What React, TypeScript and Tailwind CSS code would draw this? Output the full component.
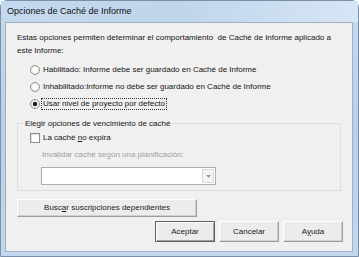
import React from 'react';

const font = { fontFamily: '"Liberation Sans", Arial, sans-serif' };

const Radio = ({ checked }: { checked?: boolean }) => (
  <svg width="10" height="10" viewBox="0 0 10 10" className="shrink-0">
    <circle cx="5" cy="5" r="4.5" fill="#ffffff" stroke="#8c8c8c" />
    <circle cx="5" cy="5" r="3.4" fill="none" stroke="#e4e4e4" />
    {checked && <circle cx="5" cy="5" r="2.2" fill="#1c1c1c" />}
  </svg>
);

const Button = ({ children, isDefault, className = '' }: { children: React.ReactNode; isDefault?: boolean; className?: string }) => (
  <button
    type="button"
    className={`flex items-center justify-center bg-[#ececec] text-[8px] text-[#1a1a1a] ${
      isDefault
        ? 'border border-[#5e5e5e] shadow-[inset_1px_1px_0_#ffffff,inset_-1px_-1px_0_#a0a0a0]'
        : 'border border-t-[#ffffff] border-l-[#ffffff] border-b-[#9c9c9c] border-r-[#9c9c9c] shadow-[inset_-1px_-1px_0_#d0d0d0]'
    } ${className}`}
  >
    {children}
  </button>
);

export default function App() {
  return (
    <div style={font} className="w-[359px] h-[257px] overflow-hidden bg-[#ffffff]">
      <div className="flex flex-col w-[359px] h-[257px] rounded-t-[7px] border border-[#7b90a8] bg-gradient-to-b from-[#c6daef] via-[#b9d0e9] to-[#c2d7ec]">
        {/* title bar */}
        <div className="h-[21px] flex items-center pl-[6px] text-[9px] text-[#101010] bg-gradient-to-r from-[#c4d9ee] via-[#bfd5ec] to-[#d7e6f5]">
          Opciones de Caché de Informe
        </div>
        {/* client area */}
        <div className="ml-[4px] mr-[5px] mb-[4px] flex-1 border border-[#9fb0c4] bg-[#f0f0f0] pl-[11px] pr-[9px] pt-[8px] text-[8px] text-[#141414]">
          <p className="leading-[13px]">
            Estas opciones permiten determinar el comportamiento&nbsp; de Caché de Informe aplicado a
            <br />
            este Informe:
          </p>
          <div className="mt-[4px] ml-[13px] flex flex-col">
            <div className="h-[17px] flex items-center gap-[2px]">
              <Radio />
              <span className="px-[1px]">Habilitado: Informe debe ser guardado en Caché de Informe</span>
            </div>
            <div className="h-[17px] flex items-center gap-[2px]">
              <Radio />
              <span className="px-[1px]">Inhabilitado:Informe no debe ser guardado en Caché de Informe</span>
            </div>
            <div className="h-[17px] flex items-center gap-[2px]">
              <Radio checked />
              <span className="px-[1px] outline outline-1 outline-dotted outline-[#333333] leading-[10px]">Usar nivel de proyecto por defecto</span>
            </div>
          </div>
          {/* group box */}
          <div className="relative mt-[11px] w-[324px] border border-[#d5dfe5] pl-[12px] pt-[5px] pb-[5px]">
            <span className="absolute left-[5px] -top-[7px] bg-[#f0f0f0] px-[2px] leading-[13px]">
              Elegir opciones de vencimiento de caché
            </span>
            <div className="h-[17px] flex items-center gap-[3px]">
              <span className="w-[10px] h-[10px] shrink-0 border border-[#8c8c8c] bg-[#ffffff] shadow-[inset_1px_1px_0_#e2e2e2]" />
              <span>
                La caché <span className="underline">n</span>o expira
              </span>
            </div>
            <div className="ml-[12px] mt-[2px] leading-[13px] text-[#a0a0a0]">Invalidar caché según una planificación:</div>
            <div className="ml-[11px] mt-[6px] w-[175px] h-[18px] flex border border-[#abadb3] bg-[#ffffff]">
              <div className="flex-1" />
              <div className="w-[12px] my-[1px] mr-[1px] flex items-center justify-center border border-[#d9d9d9] bg-[#f4f4f4]">
                <svg width="5" height="3" viewBox="0 0 5 3">
                  <path d="M0 0 H5 L2.5 3 Z" fill="#9a9a9a" />
                </svg>
              </div>
            </div>
          </div>
          <Button className="mt-[8px] w-[180px] h-[18px]">
            <span>
              Busc<span className="underline">a</span>r suscripciones dependientes
            </span>
          </Button>
          <div className="mt-[4px] flex justify-end gap-[4px]">
            <Button isDefault className="w-[60px] h-[21px]">Aceptar</Button>
            <Button className="w-[60px] h-[21px]">Cancelar</Button>
            <Button className="w-[60px] h-[21px]">
              <span>
                A<span className="underline">y</span>uda
              </span>
            </Button>
          </div>
        </div>
      </div>
    </div>
  );
}
